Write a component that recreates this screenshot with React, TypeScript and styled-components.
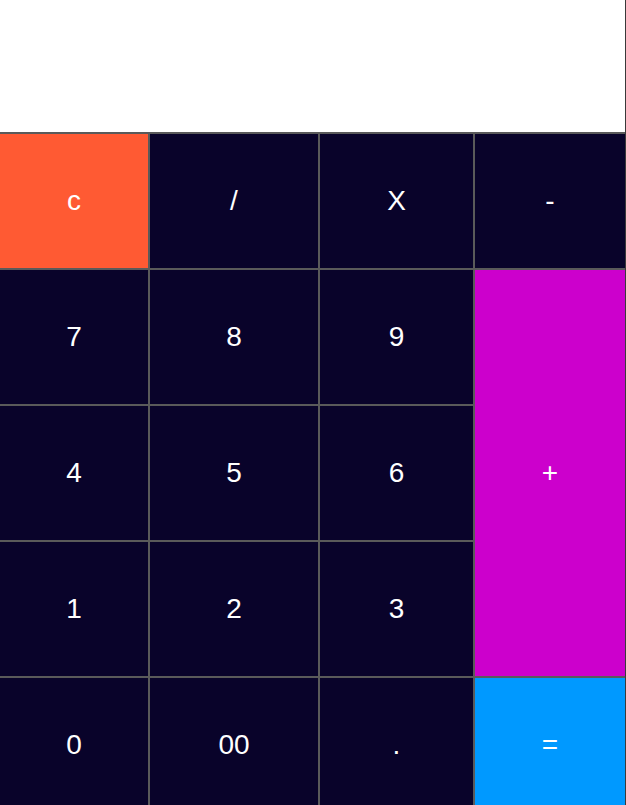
import React from "react";
import styled, { createGlobalStyle } from "styled-components";

const Global = createGlobalStyle`
  html, body { margin: 0; padding: 0; background: #ffffff; }
  body { font-family: "Liberation Sans", Arial, sans-serif; }
`;

const Calculator = styled.div`
  width: 626px;
  height: 805px;
  box-sizing: border-box;
  border-right: 1px solid #3a3a3a;
  display: flex;
  flex-direction: column;
  overflow: hidden;
`;

const Display = styled.div`
  height: 132px;
  background: #ffffff;
  flex: none;
`;

const Keypad = styled.div`
  flex: 1;
  display: grid;
  grid-template-columns: 148px 168px 153px 150px;
  grid-template-rows: 134px 134px 134px 134px 134px;
  gap: 2px;
  padding-top: 2px;
  background: #5a5a5a;
`;

type Variant = "dark" | "clear" | "plus" | "equals";

const colors: Record<Variant, string> = {
  dark: "#09032a",
  clear: "#ff5a33",
  plus: "#cc00cc",
  equals: "#0099ff",
};

const Key = styled.button<{ $variant: Variant; $rows?: number }>`
  border: none;
  margin: 0;
  padding: 0;
  background: ${(p) => colors[p.$variant]};
  color: #ffffff;
  font-family: "Liberation Sans", Arial, sans-serif;
  font-size: 28px;
  display: flex;
  align-items: center;
  justify-content: center;
  grid-row: span ${(p) => p.$rows ?? 1};
  cursor: pointer;
`;

export default function App() {
  return (
    <>
      <Global />
      <Calculator>
        <Display />
        <Keypad>
          <Key $variant="clear">c</Key>
          <Key $variant="dark">/</Key>
          <Key $variant="dark">X</Key>
          <Key $variant="dark">-</Key>
          <Key $variant="dark">7</Key>
          <Key $variant="dark">8</Key>
          <Key $variant="dark">9</Key>
          <Key $variant="plus" $rows={3}>+</Key>
          <Key $variant="dark">4</Key>
          <Key $variant="dark">5</Key>
          <Key $variant="dark">6</Key>
          <Key $variant="dark">1</Key>
          <Key $variant="dark">2</Key>
          <Key $variant="dark">3</Key>
          <Key $variant="dark">0</Key>
          <Key $variant="dark">00</Key>
          <Key $variant="dark">.</Key>
          <Key $variant="equals">=</Key>
        </Keypad>
      </Calculator>
    </>
  );
}
